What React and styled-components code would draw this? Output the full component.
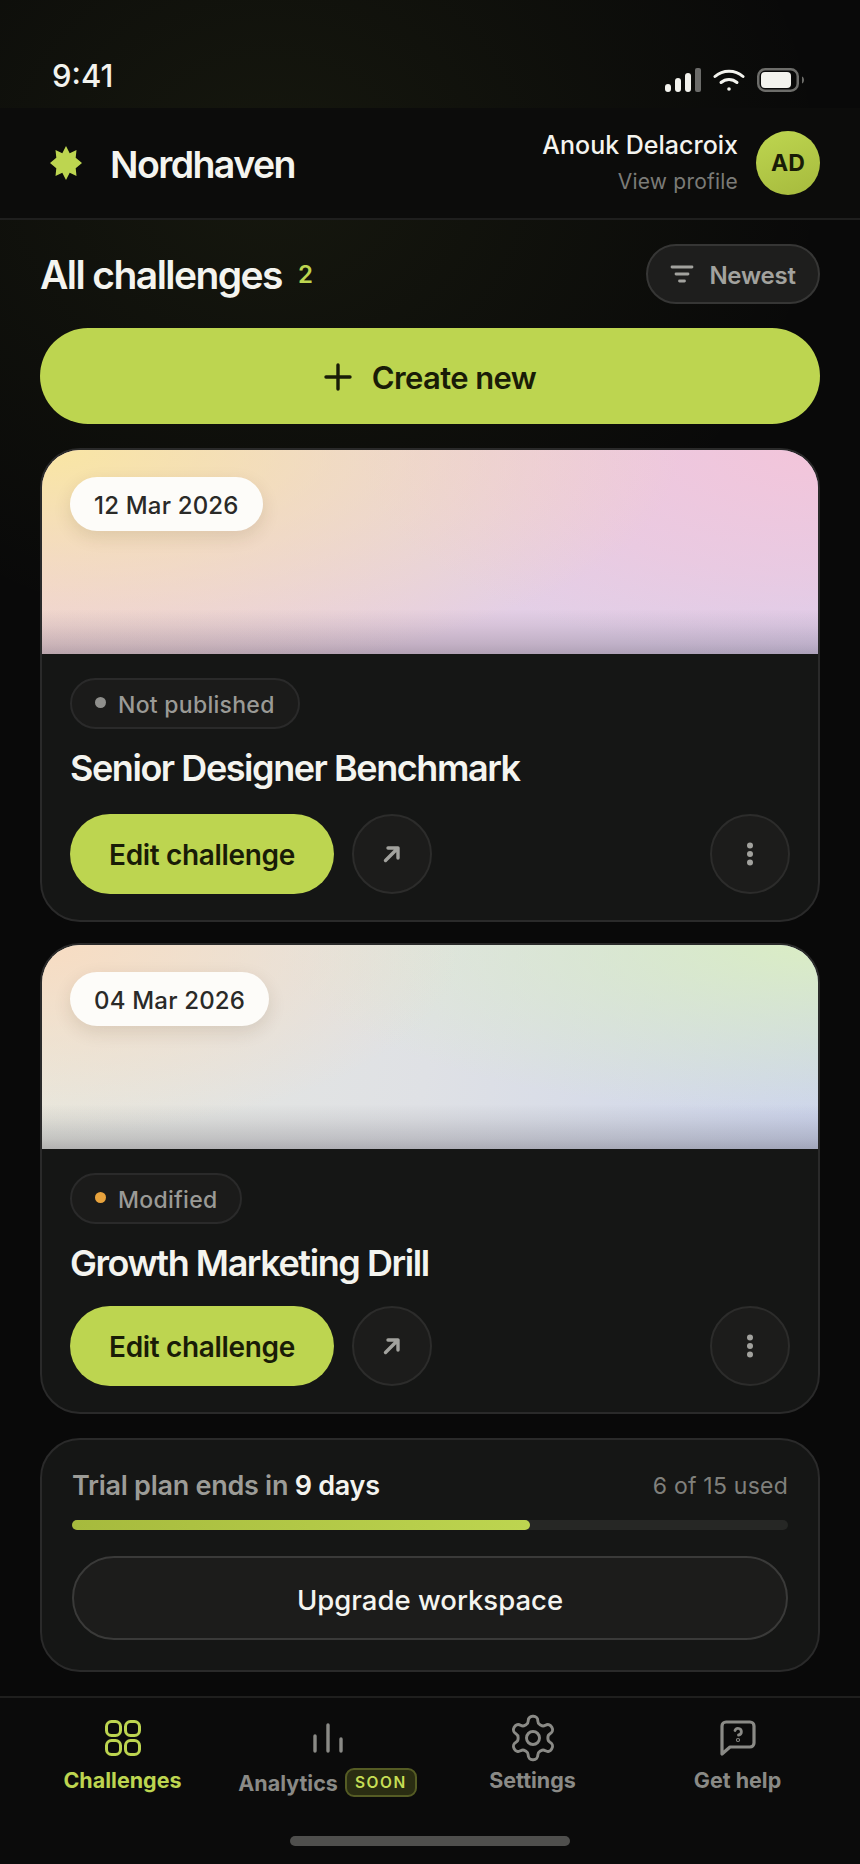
import React from "react";
import styled, { createGlobalStyle } from "styled-components";

const Global = createGlobalStyle`
  html, body { margin: 0; padding: 0; background: #090909; }
  * { box-sizing: border-box; }
  body { font-family: Inter, "Liberation Sans", sans-serif; -webkit-font-smoothing: antialiased; }
`;

const Page = styled.div`
  width: 860px;
  height: 1864px;
  display: flex;
  flex-direction: column;
  overflow: hidden;
  background:
    radial-gradient(ellipse 560px 480px at 270px 170px, rgba(190, 214, 80, 0.07), rgba(190, 214, 80, 0) 100%),
    #090909;
`;

const StatusBar = styled.div`
  height: 108px;
  padding: 0 55px 0 52px;
  display: flex;
  justify-content: space-between;
  align-items: flex-start;
`;
const Time = styled.div`
  margin-top: 58px;
  font-size: 31px;
  line-height: 36px;
  font-weight: 500;
  color: #f3f3ee;
`;
const StatusIcons = styled.div`
  margin-top: 68px;
  display: flex;
  align-items: center;
  gap: 12px;
`;

const Header = styled.header`
  height: 112px;
  padding: 0 40px 0 50px;
  display: flex;
  align-items: center;
  justify-content: space-between;
  background: #0c0c0b;
  border-bottom: 2px solid #1f1f1e;
`;
const Brand = styled.div`
  display: flex;
  align-items: center;
  gap: 28px;
`;
const BrandName = styled.div`
  padding-top: 3px;
  font-size: 37.500px;
  line-height: 44px;
  font-weight: 640;
  letter-spacing: -0.042em;
  color: #f4f4ef;
`;
const Profile = styled.div`
  display: flex;
  align-items: center;
  gap: 18px;
`;
const ProfileText = styled.div`
  display: flex;
  flex-direction: column;
  align-items: flex-end;
  gap: 8px;
  margin-top: -1px;
`;
const ProfileName = styled.div`
  font-size: 25px;
  line-height: 30px;
  font-weight: 550;
  color: #f4f4ef;
`;
const ProfileLink = styled.div`
  font-size: 21px;
  line-height: 27px;
  font-weight: 400;
  letter-spacing: 0.01em;
  color: #7b7b77;
`;
const Avatar = styled.div`
  width: 64px;
  height: 64px;
  border-radius: 50%;
  display: flex;
  align-items: center;
  justify-content: center;
  background: linear-gradient(160deg, #bed650, #a6ba3d);
  color: #191c07;
  font-size: 23px;
  font-weight: 700;
`;

const Main = styled.main`
  flex: 1;
  padding: 24px 40px 0;
  display: flex;
  flex-direction: column;
`;
const TitleRow = styled.div`
  height: 60px;
  display: flex;
  align-items: center;
  justify-content: space-between;
`;
const TitleGroup = styled.div`
  display: flex;
  align-items: center;
  gap: 16px;
`;
const PageTitle = styled.h1`
  margin: 2px 0 0;
  font-size: 39px;
  line-height: 48px;
  font-weight: 640;
  letter-spacing: -0.04em;
  color: #f4f4ef;
`;
const Count = styled.span`
  font-size: 24px;
  font-weight: 600;
  color: #bdd550;
`;
const SortButton = styled.button`
  width: 174px;
  height: 60px;
  border-radius: 30px;
  border: 2px solid #363635;
  background: #1e1e1d;
  color: #a2a29e;
  display: flex;
  align-items: center;
  justify-content: center;
  gap: 15px;
  padding: 0;
  font: 640 24px Inter, sans-serif;
  letter-spacing: -0.01em;
`;
const SortLabel = styled.span`
  padding-top: 2px;
`;
const CreateButton = styled.button`
  margin-top: 24px;
  height: 96px;
  border: 0;
  border-radius: 48px;
  background: #bdd550;
  color: #191c07;
  display: flex;
  align-items: center;
  justify-content: center;
  gap: 20px;
  padding: 2px 0 0;
  font: 630 31px Inter, sans-serif;
  letter-spacing: -0.02em;
`;

const Card = styled.article`
  margin-top: ${(p) => p.$top}px;
  height: ${(p) => p.$height}px;
  border-radius: 40px;
  border: 2px solid #2a2a2a;
  background: #151615;
  overflow: hidden;
  display: flex;
  flex-direction: column;
`;
const Hero = styled.div`
  height: 204px;
  padding: 27px 28px;
  flex: none;
  background: ${(p) => p.$bg};
`;
const DatePill = styled.div`
  display: inline-flex;
  align-items: center;
  height: 54px;
  padding: 2px 24px 0;
  border-radius: 27px;
  background: #fdfcf9;
  box-shadow: 0 6px 18px rgba(60, 40, 20, 0.12);
  color: #2a2a28;
  font-size: 24px;
  font-weight: 550;
  letter-spacing: 0.008em;
`;
const CardBody = styled.div`
  flex: 1;
  padding: 24px 28px 26px;
  display: flex;
  flex-direction: column;
  align-items: flex-start;
`;
const StatusPill = styled.div`
  height: 51px;
  padding: 0 23px;
  border-radius: 26px;
  border: 2px solid #2a2a2a;
  background: #1b1b1a;
  display: flex;
  align-items: center;
  gap: 12px;
  color: #9a9a96;
  font-size: 23px;
  font-weight: 550;
  letter-spacing: 0.012em;
`;
const Dot = styled.span`
  width: 11px;
  height: 11px;
  margin-top: -2px;
  border-radius: 50%;
  background: ${(p) => p.$color};
`;
const StatusText = styled.span`
  padding-top: 3px;
`;
const CardTitle = styled.h2`
  margin: 17px 0 0;
  font-size: 36px;
  line-height: 45px;
  font-weight: 630;
  letter-spacing: -0.04em;
  color: #f4f4ef;
`;
const Actions = styled.div`
  margin-top: auto;
  width: 100%;
  display: flex;
  align-items: center;
  gap: 18px;
`;
const EditButton = styled.button`
  width: 264px;
  height: 80px;
  border: 0;
  border-radius: 40px;
  background: #bdd550;
  color: #191c07;
  padding: 1px 0 0;
  font: 620 28px Inter, sans-serif;
  letter-spacing: -0.012em;
`;
const RoundButton = styled.button`
  width: 80px;
  height: 80px;
  flex: none;
  border-radius: 50%;
  border: 2px solid #2c2c2b;
  background: #1c1c1b;
  color: #a2a29e;
  padding: 0;
  display: flex;
  align-items: center;
  justify-content: center;
  margin-left: ${(p) => (p.$end ? "auto" : 0)};
`;

const TrialCard = styled.section`
  margin-top: 24px;
  height: 234px;
  border-radius: 40px;
  border: 2px solid #2a2a2a;
  background: #151615;
  padding: 25px 30px 0;
  display: flex;
  flex-direction: column;
`;
const TrialRow = styled.div`
  height: 40px;
  display: flex;
  align-items: center;
  justify-content: space-between;
`;
const TrialText = styled.div`
  font-size: 27px;
  font-weight: 620;
  letter-spacing: -0.01em;
  color: #9c9c97;
  b { font-weight: 620; color: #f4f4ef; }
`;
const TrialUsage = styled.div`
  margin-top: 2px;
  font-size: 23px;
  font-weight: 400;
  letter-spacing: 0.01em;
  color: #80807c;
`;
const Track = styled.div`
  margin-top: 15px;
  height: 10px;
  border-radius: 5px;
  background: #262725;
`;
const Fill = styled.div`
  height: 100%;
  border-radius: 5px;
  background: linear-gradient(90deg, #a6ba3d, #bdd550);
`;
const UpgradeButton = styled.button`
  margin-top: 26px;
  height: 84px;
  border-radius: 42px;
  border: 2px solid #3a3a39;
  background: #1c1c1b;
  color: #f4f4ef;
  padding: 3px 0 0;
  font: 550 27.500px Inter, sans-serif;
`;

const Nav = styled.nav`
  margin-top: 24px;
  height: 168px;
  flex: none;
  background: #0b0b0b;
  border-top: 2px solid #1f1f1e;
  display: flex;
  flex-direction: column;
  align-items: center;
`;
const Tabs = styled.div`
  width: 820px;
  height: 138px;
  display: grid;
  grid-template-columns: repeat(4, 1fr);
`;
const Tab = styled.div`
  display: flex;
  flex-direction: column;
  align-items: center;
  color: ${(p) => (p.$active ? "#bdd550" : "#8a8a86")};
`;
const TabIcon = styled.div`
  margin-top: 14px;
  height: 52px;
  display: flex;
  align-items: center;
  justify-content: center;
`;
const TabLabel = styled.div`
  margin-top: 2px;
  display: flex;
  align-items: center;
  gap: 7px;
  font-size: 21.500px;
  line-height: 28px;
  font-weight: 650;
  white-space: nowrap;
`;
const TabText = styled.span`
  padding-top: ${(p) => (p.$low ? 3 : 0)}px;
`;
const SoonBadge = styled.span`
  height: 29px;
  margin-top: 2px;
  padding: 0 8px;
  border-radius: 9px;
  border: 2px solid #555c24;
  background: #2a2d12;
  color: #c6de55;
  font-size: 15.500px;
  line-height: 25px;
  font-weight: 640;
  letter-spacing: 0.1em;
`;
const HomeBar = styled.div`
  width: 280px;
  height: 10px;
  border-radius: 5px;
  background: #4f4f4d;
`;

const Signal = () => (
  <svg width="36" height="24" viewBox="0 0 36 24" fill="#f3f3ee">
    <rect x="0" y="16" width="6" height="8" rx="3" />
    <rect x="10" y="10" width="6" height="14" rx="3" />
    <rect x="20" y="5" width="6" height="19" rx="3" />
    <rect x="30" y="0" width="6" height="24" rx="2" fill="#6b6b69" />
  </svg>
);
const Wifi = () => (
  <svg width="32" height="24" viewBox="0 0 32 24" fill="none" stroke="#f3f3ee" strokeWidth="3" strokeLinecap="round">
    <path d="M2 8.500C9.800 1.500 22.200 1.500 30 8.500" />
    <path d="M8 14.500c4.600-4 11.400-4 16 0" />
    <circle cx="16" cy="21" r="1.800" fill="#f3f3ee" stroke="none" />
  </svg>
);
const Battery = () => (
  <svg width="48" height="24" viewBox="0 0 48 24">
    <rect x="1.250" y="1.250" width="39.500" height="21.500" rx="7" fill="none" stroke="#6d6d6a" strokeWidth="2.500" />
    <rect x="4" y="4" width="30" height="16" rx="4" fill="#f3f3ee" />
    <path d="M45 8.500c1.500.6 2 2 2 3.500s-.5 2.900-2 3.500z" fill="#6d6d6a" />
  </svg>
);
const Star = () => (
  <svg width="32" height="34" viewBox="0 0 32 34" fill="#bdd550">
    <path d="M16 0l3.700 7.200 6.800-3.200-.8 7.700L32 17l-6.300 5.300.8 7.700-6.800-3.200L16 34l-3.700-7.200-6.800 3.200.8-7.700L0 17l6.300-5.300-.8-7.700 6.800 3.200z" />
  </svg>
);
const SortIcon = () => (
  <svg width="24" height="20" viewBox="0 0 24 20" fill="none" stroke="currentColor" strokeWidth="2.800" strokeLinecap="round">
    <path d="M2 3h20M6 10h12M9.500 17h5" />
  </svg>
);
const Plus = () => (
  <svg width="28" height="28" viewBox="0 0 28 28" fill="none" stroke="currentColor" strokeWidth="3.400" strokeLinecap="round">
    <path d="M14 2v24M2 14h24" />
  </svg>
);
const Arrow = () => (
  <svg width="18" height="18" viewBox="0 0 18 18" fill="none" stroke="currentColor" strokeWidth="3.400" strokeLinecap="round" strokeLinejoin="round">
    <path d="M2.500 15.500L15 3M5 3h10v10" />
  </svg>
);
const Dots = () => (
  <svg width="8" height="24" viewBox="0 0 8 24" fill="currentColor">
    <circle cx="4" cy="3.500" r="3" />
    <circle cx="4" cy="12" r="3" />
    <circle cx="4" cy="20.500" r="3" />
  </svg>
);
const GridIcon = () => (
  <svg width="36" height="36" viewBox="0 0 36 36" fill="none" stroke="currentColor" strokeWidth="3">
    <rect x="1.500" y="1.500" width="14" height="14" rx="5" />
    <rect x="20.500" y="1.500" width="14" height="14" rx="5" />
    <rect x="1.500" y="20.500" width="14" height="14" rx="5" />
    <rect x="20.500" y="20.500" width="14" height="14" rx="5" />
  </svg>
);
const BarsIcon = () => (
  <svg width="32" height="32" viewBox="0 0 32 32" fill="none" stroke="currentColor" strokeWidth="3.400" strokeLinecap="round">
    <path d="M3 14v15M16 3v26M29 17v12" />
  </svg>
);
const GearIcon = () => (
  <svg width="52" height="52" viewBox="0 0 24 24" fill="none" stroke="currentColor" strokeWidth="1.350" strokeLinecap="round" strokeLinejoin="round">
    <path d="M12.220 2h-.440a2 2 0 0 0-2 2v.180a2 2 0 0 1-1 1.730l-.430.250a2 2 0 0 1-2 0l-.150-.080a2 2 0 0 0-2.730.730l-.220.380a2 2 0 0 0 .730 2.730l.150.100a2 2 0 0 1 1 1.720v.510a2 2 0 0 1-1 1.740l-.150.090a2 2 0 0 0-.730 2.730l.220.380a2 2 0 0 0 2.730.730l.150-.080a2 2 0 0 1 2 0l.430.250a2 2 0 0 1 1 1.730V20a2 2 0 0 0 2 2h.440a2 2 0 0 0 2-2v-.180a2 2 0 0 1 1-1.730l.430-.250a2 2 0 0 1 2 0l.150.080a2 2 0 0 0 2.730-.730l.220-.390a2 2 0 0 0-.730-2.730l-.150-.080a2 2 0 0 1-1-1.740v-.500a2 2 0 0 1 1-1.740l.150-.090a2 2 0 0 0 .730-2.730l-.220-.380a2 2 0 0 0-2.730-.730l-.150.080a2 2 0 0 1-2 0l-.430-.250a2 2 0 0 1-1-1.730V4a2 2 0 0 0-2-2z" />
    <circle cx="12" cy="12" r="3" />
  </svg>
);
const HelpIcon = () => (
  <svg width="36" height="36" viewBox="0 0 36 36" fill="none" stroke="currentColor" strokeWidth="3.200" strokeLinejoin="round" strokeLinecap="round">
    <path d="M2 6a4 4 0 0 1 4-4h24a4 4 0 0 1 4 4v17a4 4 0 0 1-4 4H10l-8 7z" />
    <path d="M15 10.500a3.300 3.300 0 1 1 3.500 4.500" strokeWidth="2.800" />
    <circle cx="18" cy="20" r="0.500" />
  </svg>
);

const fadeBottom =
  "linear-gradient(180deg, rgba(60,55,70,0) 78%, rgba(60,55,70,0.08) 86%, rgba(60,55,70,0.2) 95%, rgba(60,55,70,0.3) 100%)";
const heroOne = `${fadeBottom},
  radial-gradient(ellipse 640px 240px at 0% 0%, #f9e6a3 0%, rgba(249,230,163,0.5) 45%, rgba(249,230,163,0) 100%),
  radial-gradient(ellipse 460px 210px at 100% 0%, #f3c5da 0%, rgba(243,197,218,0.5) 60%, rgba(243,197,218,0) 100%),
  linear-gradient(100deg, #eed0df 0%, #e6cfe4 50%, #dccfec 100%)`;
const heroTwo = `${fadeBottom},
  radial-gradient(ellipse 420px 190px at 0% 0%, #f7dcc2 0%, rgba(247,220,194,0) 100%),
  radial-gradient(ellipse 540px 170px at 100% 0%, #daedc4 0%, rgba(218,237,196,0) 100%),
  linear-gradient(100deg, #e7e8df 0%, #dfe1e5 50%, #cdd5ec 100%)`;

const cards = [
  { date: "12 Mar 2026", bg: heroOne, status: "Not published", dot: "#8f8f8c", title: "Senior Designer Benchmark", top: 24, height: 474 },
  { date: "04 Mar 2026", bg: heroTwo, status: "Modified", dot: "#e8a33d", title: "Growth Marketing Drill", top: 21, height: 471 },
];

export default function App() {
  return (
    <Page>
      <Global />
      <StatusBar>
        <Time>9:41</Time>
        <StatusIcons>
          <Signal />
          <Wifi />
          <Battery />
        </StatusIcons>
      </StatusBar>
      <Header>
        <Brand>
          <Star />
          <BrandName>Nordhaven</BrandName>
        </Brand>
        <Profile>
          <ProfileText>
            <ProfileName>Anouk Delacroix</ProfileName>
            <ProfileLink>View profile</ProfileLink>
          </ProfileText>
          <Avatar>AD</Avatar>
        </Profile>
      </Header>
      <Main>
        <TitleRow>
          <TitleGroup>
            <PageTitle>All challenges</PageTitle>
            <Count>2</Count>
          </TitleGroup>
          <SortButton>
            <SortIcon />
            <SortLabel>Newest</SortLabel>
          </SortButton>
        </TitleRow>
        <CreateButton>
          <Plus />
          Create new
        </CreateButton>
        {cards.map((c) => (
          <Card key={c.title} $top={c.top} $height={c.height}>
            <Hero $bg={c.bg}>
              <DatePill>{c.date}</DatePill>
            </Hero>
            <CardBody>
              <StatusPill>
                <Dot $color={c.dot} />
                <StatusText>{c.status}</StatusText>
              </StatusPill>
              <CardTitle>{c.title}</CardTitle>
              <Actions>
                <EditButton>Edit challenge</EditButton>
                <RoundButton><Arrow /></RoundButton>
                <RoundButton $end><Dots /></RoundButton>
              </Actions>
            </CardBody>
          </Card>
        ))}
        <TrialCard>
          <TrialRow>
            <TrialText>Trial plan ends in <b>9 days</b></TrialText>
            <TrialUsage>6 of 15 used</TrialUsage>
          </TrialRow>
          <Track>
            <Fill style={{ width: "64%" }} />
          </Track>
          <UpgradeButton>Upgrade workspace</UpgradeButton>
        </TrialCard>
      </Main>
      <Nav>
        <Tabs>
          <Tab $active>
            <TabIcon><GridIcon /></TabIcon>
            <TabLabel><TabText>Challenges</TabText></TabLabel>
          </Tab>
          <Tab>
            <TabIcon><BarsIcon /></TabIcon>
            <TabLabel><TabText $low>Analytics</TabText><SoonBadge>SOON</SoonBadge></TabLabel>
          </Tab>
          <Tab>
            <TabIcon><GearIcon /></TabIcon>
            <TabLabel><TabText>Settings</TabText></TabLabel>
          </Tab>
          <Tab>
            <TabIcon><HelpIcon /></TabIcon>
            <TabLabel><TabText>Get help</TabText></TabLabel>
          </Tab>
        </Tabs>
        <HomeBar />
      </Nav>
    </Page>
  );
}
